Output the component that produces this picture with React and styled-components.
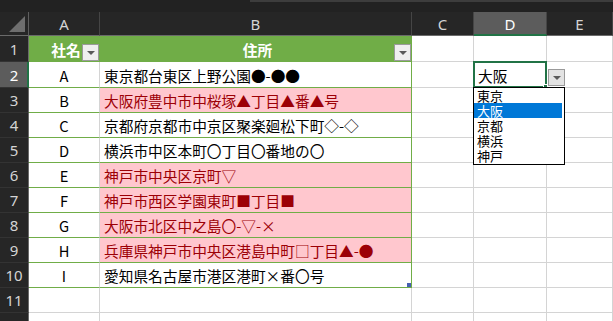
import React from 'react';
import styled, { createGlobalStyle, css } from 'styled-components';

const GlobalStyle = createGlobalStyle`
  html, body { margin: 0; padding: 0; background: #ffffff; overflow: hidden; }
  body { font-family: "Noto Sans CJK JP", "Noto Sans", sans-serif; }
  * { box-sizing: border-box; }
`;

const GRID = '#d4d4d4';
const TGREEN = '#70ad47';
const SEL = '#217346';

const Sheet = styled.div`
  position: relative;
  width: 613px;
  height: 321px;
  overflow: hidden;
  background: #ffffff;
`;

const TopBand = styled.div`
  height: 12px;
  background: #222222;
  display: flex;
  justify-content: flex-end;
`;

const TopLine = styled.div`
  width: 363px;
  height: 2px;
  background: #3d3d3d;
`;

const Grid = styled.div`
  display: grid;
  grid-template-columns: 29px 71px 312px 62px 73px 66px;
  grid-template-rows: 24px 26px 26px repeat(10, 25px);
`;

const Corner = styled.div`
  position: relative;
  background: #262626;
  border-right: 1px solid #5e5e5e;
  border-bottom: 1px solid #6a6a6a;
`;

const CornerTri = styled.div`
  position: absolute;
  right: 3px;
  bottom: 3px;
  width: 0;
  height: 0;
  border-style: solid;
  border-width: 0 0 16px 16px;
  border-color: transparent transparent #6e6e6e transparent;
`;

const ColHeader = styled.div`
  display: flex;
  align-items: center;
  justify-content: center;
  background: ${p => (p.$sel ? '#5c5c5c' : '#262626')};
  color: ${p => (p.$sel ? '#ffffff' : '#d4d4d4')};
  border-right: 1px solid #454545;
  border-bottom: ${p => (p.$sel ? `2px solid ${SEL}` : '1px solid #6a6a6a')};
  font-family: "Noto Sans", "Open Sans", sans-serif;
  font-size: 15px;
  padding-top: 1px;
`;

const RowHeader = styled.div`
  display: flex;
  align-items: center;
  justify-content: center;
  background: ${p => (p.$sel ? '#5c5c5c' : '#262626')};
  color: ${p => (p.$sel ? '#ffffff' : '#d4d4d4')};
  border-right: ${p => (p.$sel ? `2px solid ${SEL}` : '1px solid #6a6a6a')};
  border-bottom: 1px solid #333333;
  font-family: "Noto Sans", "Open Sans", sans-serif;
  font-size: 15px;
  padding-left: ${p => (p.$sel ? '1px' : '0')};
`;

const variantStyles = {
  head: css`
    background: ${TGREEN};
    color: #ffffff;
    font-weight: 700;
    justify-content: center;
    border-right-color: ${TGREEN};
    border-bottom-color: ${TGREEN};
  `,
  plain: css`
    background: #ffffff;
    color: #000000;
    border-bottom-color: ${TGREEN};
  `,
  pink: css`
    background: #ffc7ce;
    color: #9c0006;
    border-bottom-color: ${TGREEN};
  `,
  empty: css`
    background: #ffffff;
  `,
};

const Cell = styled.div`
  position: relative;
  display: flex;
  align-items: center;
  padding: 1px 0 0 4px;
  font-size: 14.7px;
  white-space: nowrap;
  border-right: 1px solid ${GRID};
  border-bottom: 1px solid ${GRID};
  ${p => variantStyles[p.$v || 'empty']}
  ${p => p.$center && css`justify-content: center; padding-left: 0;`}
  ${p => p.$tableEdge && css`border-right-color: ${TGREEN};`}
`;

const FilterBtn = styled.div`
  position: absolute;
  right: 0;
  top: 8px;
  width: 17px;
  height: 17px;
  background: #efefef;
  border: 1px solid #9a9a9a;
  display: flex;
  align-items: center;
  justify-content: center;
`;

const DownTri = styled.span`
  width: 0;
  height: 0;
  border-left: 4px solid transparent;
  border-right: 4px solid transparent;
  border-top: 4px solid #5a5a5a;
`;

const Selection = styled.div`
  position: absolute;
  left: -1px;
  top: -1px;
  right: -1px;
  bottom: -1px;
  border: 2px solid ${SEL};
  pointer-events: none;
`;

const SelHandle = styled.div`
  position: absolute;
  right: -3px;
  bottom: -3px;
  width: 5px;
  height: 5px;
  background: ${SEL};
  border: 1px solid #ffffff;
`;

const ResizeHandle = styled.div`
  position: absolute;
  right: 0;
  bottom: 0;
  width: 4px;
  height: 4px;
  background: #4760b0;
`;

const ArrowBtn = styled.div`
  position: absolute;
  left: 74px;
  top: 7px;
  width: 17px;
  height: 17px;
  background: #e3e3e3;
  border: 1px solid #9a9a9a;
  display: flex;
  align-items: center;
  justify-content: center;
  z-index: 3;
`;

const ListBox = styled.div`
  position: absolute;
  left: -1px;
  top: 25px;
  width: 92px;
  height: 78px;
  background: #ffffff;
  border: 1px solid #000000;
  padding: 0 2px 0 0;
  z-index: 4;
  display: flex;
  flex-direction: column;
`;

const ListItem = styled.div`
  height: 15px;
  line-height: 15px;
  padding-left: 3px;
  font-size: 13px;
  color: ${p => (p.$active ? '#ffffff' : '#000000')};
  background: ${p => (p.$active ? '#0078d7' : 'transparent')};
`;

const rows = [
  { code: 'A', addr: '東京都台東区上野公園●-●●', pink: false },
  { code: 'B', addr: '大阪府豊中市中桜塚▲丁目▲番▲号', pink: true },
  { code: 'C', addr: '京都府京都市中京区聚楽廻松下町◇-◇', pink: false },
  { code: 'D', addr: '横浜市中区本町〇丁目〇番地の〇', pink: false },
  { code: 'E', addr: '神戸市中央区京町▽', pink: true },
  { code: 'F', addr: '神戸市西区学園東町■丁目■', pink: true },
  { code: 'G', addr: '大阪市北区中之島〇-▽-×', pink: true },
  { code: 'H', addr: '兵庫県神戸市中央区港島中町□丁目▲-●', pink: true },
  { code: 'I', addr: '愛知県名古屋市港区港町×番〇号', pink: false },
];

const cities = ['東京', '大阪', '京都', '横浜', '神戸'];

export default function App() {
  return (
    <>
      <GlobalStyle />
      <Sheet>
        <TopBand>
          <TopLine />
        </TopBand>
        <Grid>
          <Corner>
            <CornerTri />
          </Corner>
          <ColHeader>A</ColHeader>
          <ColHeader>B</ColHeader>
          <ColHeader>C</ColHeader>
          <ColHeader $sel>D</ColHeader>
          <ColHeader>E</ColHeader>

          <RowHeader>1</RowHeader>
          <Cell $v="head">
            社名
            <FilterBtn><DownTri /></FilterBtn>
          </Cell>
          <Cell $v="head">
            住所
            <FilterBtn><DownTri /></FilterBtn>
          </Cell>
          <Cell />
          <Cell />
          <Cell />

          {rows.map((r, i) => {
            const n = i + 2;
            return (
              <React.Fragment key={r.code}>
                <RowHeader $sel={n === 2}>{n}</RowHeader>
                <Cell $v="plain" $center>
                  {r.code}
                </Cell>
                <Cell $v={r.pink ? 'pink' : 'plain'} $tableEdge>
                  {r.addr}
                  {n === 10 && <ResizeHandle />}
                </Cell>
                <Cell />
                {n === 2 ? (
                  <Cell>
                    大阪
                    <Selection>
                      <SelHandle />
                    </Selection>
                    <ArrowBtn><DownTri /></ArrowBtn>
                    <ListBox>
                      {cities.map(c => (
                        <ListItem key={c} $active={c === '大阪'}>{c}</ListItem>
                      ))}
                    </ListBox>
                  </Cell>
                ) : (
                  <Cell />
                )}
                <Cell />
              </React.Fragment>
            );
          })}

          {[11, 12].map(n => (
            <React.Fragment key={n}>
              <RowHeader>{n}</RowHeader>
              <Cell />
              <Cell />
              <Cell />
              <Cell />
              <Cell />
            </React.Fragment>
          ))}
        </Grid>
      </Sheet>
    </>
  );
}
